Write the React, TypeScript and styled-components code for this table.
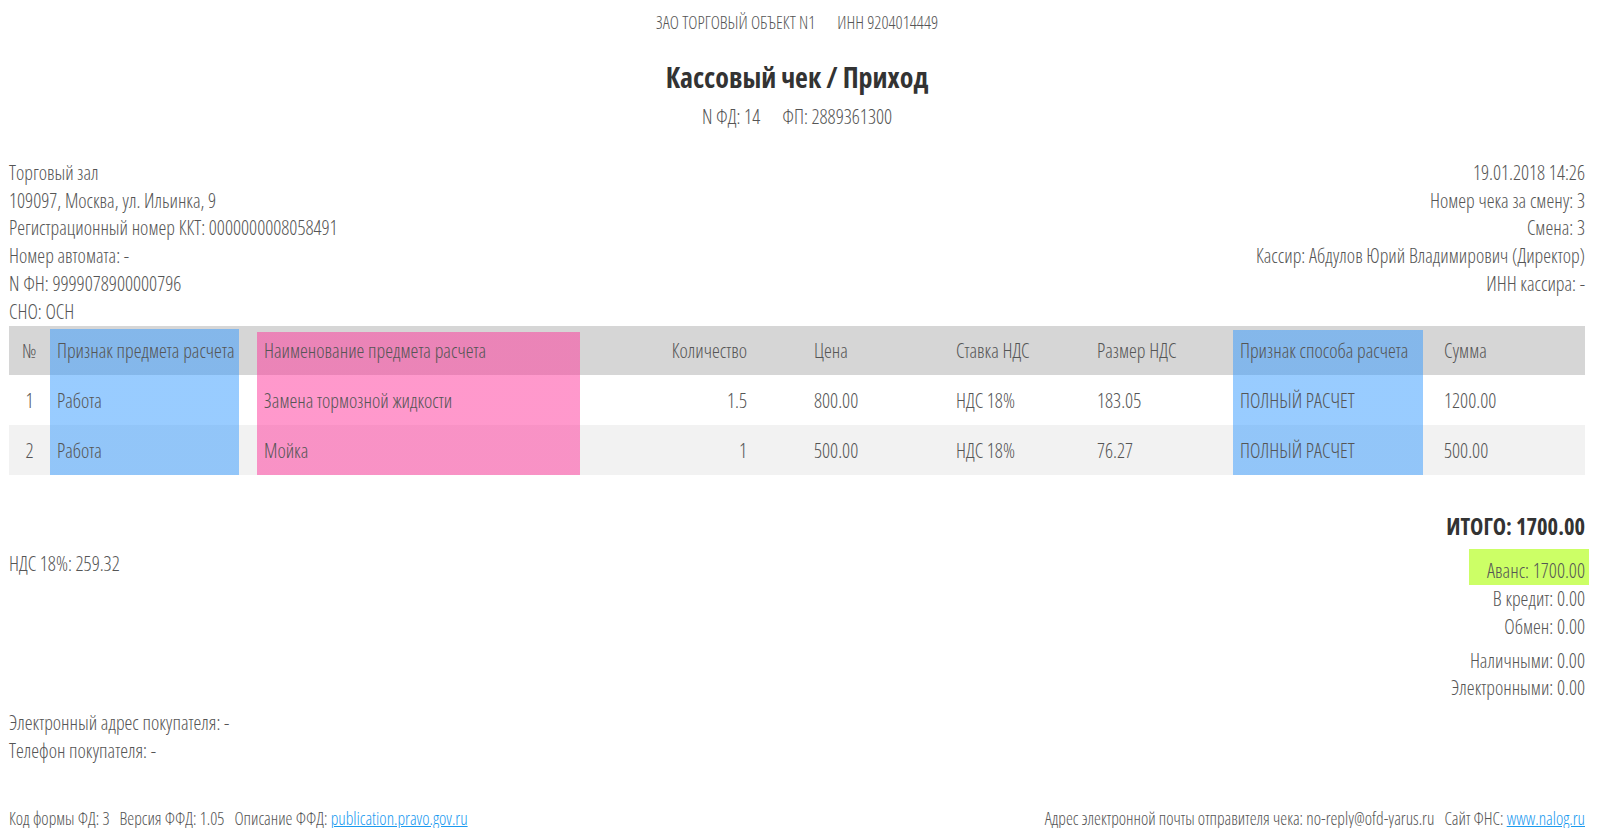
import React from 'react';
import styled, { createGlobalStyle, css } from 'styled-components';

const GlobalStyle = createGlobalStyle`
  html, body {
    margin: 0;
    padding: 0;
    background: #fff;
  }
  body {
    font-family: "Open Sans", "Liberation Sans Narrow", "DejaVu Sans Condensed", sans-serif;
    font-stretch: 75%;
    font-weight: 300;
    color: #555;
  }
`;

type Mark = 'blue' | 'pink';

interface Column {
  title: string;
  width: number;
  align?: 'left' | 'right' | 'center';
  pr?: number;
  mark?: Mark;
  markRight?: number;
  headTop?: number;
}

const columns: Column[] = [
  { title: '№', width: 41, align: 'center' },
  { title: 'Признак предмета расчета', width: 207, mark: 'blue', markRight: 18, headTop: 3 },
  { title: 'Наименование предмета расчета', width: 323, mark: 'pink', markRight: 0, headTop: 6 },
  { title: 'Количество', width: 227, align: 'right', pr: 60 },
  { title: 'Цена', width: 142 },
  { title: 'Ставка НДС', width: 141 },
  { title: 'Размер НДС', width: 143 },
  { title: 'Признак способа расчета', width: 204, mark: 'blue', markRight: 14, headTop: 4 },
  { title: 'Сумма', width: 148 },
];

const rows = [
  ['1', 'Работа', 'Замена тормозной жидкости', '1.5', '800.00', 'НДС 18%', '183.05', 'ПОЛНЫЙ РАСЧЕТ', '1200.00'],
  ['2', 'Работа', 'Мойка', '1', '500.00', 'НДС 18%', '76.27', 'ПОЛНЫЙ РАСЧЕТ', '500.00'],
];

const markColors: Record<Mark, string> = {
  blue: 'rgba(51, 153, 255, 0.5)',
  pink: 'rgba(255, 51, 153, 0.5)',
};

const Page = styled.div`
  padding: 12px 18px 0 9px;
  font-size: 19.8px;
`;

const TopLine = styled.div<{ $size?: number }>`
  display: flex;
  justify-content: center;
  gap: 22px;
  font-size: ${(p) => p.$size ?? 17.4}px;
  line-height: 20px;
`;

const Title = styled.h1`
  margin: 29px 0 0;
  text-align: center;
  font-size: 28px;
  line-height: 32px;
  font-weight: 700;
  color: #333;
`;

const SubLine = styled(TopLine)`
  margin-top: 14px;
`;

const InfoGrid = styled.div`
  display: flex;
  justify-content: space-between;
  margin-top: 32px;
`;

const InfoCol = styled.div<{ $right?: boolean }>`
  display: flex;
  flex-direction: column;
  text-align: ${(p) => (p.$right ? 'right' : 'left')};
`;

const Line = styled.div`
  line-height: 27.7px;
  white-space: nowrap;
`;

const Table = styled.table`
  width: 100%;
  border-collapse: collapse;
  table-layout: fixed;
  margin-top: 1px;
`;

const HeadRow = styled.tr`
  background: #d6d6d6;
  height: 49px;
`;

const BodyRow = styled.tr<{ $odd?: boolean }>`
  background: ${(p) => (p.$odd ? '#f2f2f2' : '#fff')};
  height: 50px;
`;

interface CellProps {
  $align?: string;
  $pr?: number;
  $mark?: Mark;
  $markRight?: number;
  $top?: number;
}

const cellBase = css<CellProps>`
  padding: 0 ${(p) => p.$pr ?? 7}px 0 7px;
  text-align: ${(p) => p.$align ?? 'left'};
  font-weight: 300;
  white-space: nowrap;
  vertical-align: middle;
  ${(p) =>
    p.$mark &&
    css`
      background-image: linear-gradient(${markColors[p.$mark]}, ${markColors[p.$mark]});
      background-repeat: no-repeat;
      background-position: left bottom;
      background-size: calc(100% - ${p.$markRight ?? 0}px) calc(100% - ${p.$top ?? 0}px);
    `}
`;

const Th = styled.th<CellProps>`
  ${cellBase}
`;

const Td = styled.td<CellProps>`
  ${cellBase}
`;

const Total = styled.div`
  margin-top: 38px;
  text-align: right;
  font-size: 22.5px;
  line-height: 28px;
  font-weight: 700;
  color: #333;
  font-stretch: 87.5%;
`;

const Summary = styled.div`
  display: flex;
  justify-content: space-between;
  align-items: flex-start;
  margin-top: 8px;
`;

const LeftCol = styled.div`
  padding-top: 1px;
`;

const RightCol = styled.div`
  display: flex;
  flex-direction: column;
  align-items: flex-end;
`;

const Highlight = styled.div`
  background: #ccff66;
  padding: 8px 4px 0 18px;
  margin-right: -4px;
  line-height: 28px;
`;

const Group = styled.div<{ $gap?: number }>`
  margin-top: ${(p) => p.$gap ?? 0}px;
  text-align: right;
`;

const Buyer = styled.div`
  margin-top: 7px;
`;

const Footer = styled.div`
  display: flex;
  justify-content: space-between;
  margin-top: 44px;
  font-size: 17.4px;
  line-height: 20px;
`;

const FooterSide = styled.div`
  display: flex;
  gap: 10px;
  white-space: nowrap;
`;

const Link = styled.a`
  color: #1a9af0;
  text-decoration: underline;
`;

export default function App() {
  return (
    <Page>
      <GlobalStyle />
      <TopLine>
        <span>ЗАО ТОРГОВЫЙ ОБЪЕКТ N1</span>
        <span>ИНН 9204014449</span>
      </TopLine>
      <Title>Кассовый чек / Приход</Title>
      <SubLine $size={19.8}>
        <span>N ФД: 14</span>
        <span>ФП: 2889361300</span>
      </SubLine>

      <InfoGrid>
        <InfoCol>
          <Line>Торговый зал</Line>
          <Line>109097, Москва, ул. Ильинка, 9</Line>
          <Line>Регистрационный номер ККТ: 0000000008058491</Line>
          <Line>Номер автомата: -</Line>
          <Line>N ФН: 9999078900000796</Line>
          <Line>СНО: ОСН</Line>
        </InfoCol>
        <InfoCol $right>
          <Line>19.01.2018 14:26</Line>
          <Line>Номер чека за смену: 3</Line>
          <Line>Смена: 3</Line>
          <Line>Кассир: Абдулов Юрий Владимирович (Директор)</Line>
          <Line>ИНН кассира: -</Line>
        </InfoCol>
      </InfoGrid>

      <Table>
        <colgroup>
          {columns.map((c, i) => (
            <col key={i} style={{ width: c.width }} />
          ))}
        </colgroup>
        <thead>
          <HeadRow>
            {columns.map((c, i) => (
              <Th key={i} $align={c.align} $pr={c.pr} $mark={c.mark} $markRight={c.markRight} $top={c.headTop}>
                {c.title}
              </Th>
            ))}
          </HeadRow>
        </thead>
        <tbody>
          {rows.map((r, ri) => (
            <BodyRow key={ri} $odd={ri % 2 === 1}>
              {r.map((v, ci) => {
                const c = columns[ci];
                return (
                  <Td key={ci} $align={c.align} $pr={c.pr} $mark={c.mark} $markRight={c.markRight}>
                    {v}
                  </Td>
                );
              })}
            </BodyRow>
          ))}
        </tbody>
      </Table>

      <Total>ИТОГО: 1700.00</Total>

      <Summary>
        <LeftCol>
          <Line>НДС 18%: 259.32</Line>
        </LeftCol>
        <RightCol>
          <Highlight>Аванс: 1700.00</Highlight>
          <Group>
            <Line>В кредит: 0.00</Line>
            <Line>Обмен: 0.00</Line>
          </Group>
          <Group $gap={6}>
            <Line>Наличными: 0.00</Line>
            <Line>Электронными: 0.00</Line>
          </Group>
        </RightCol>
      </Summary>

      <Buyer>
        <Line>Электронный адрес покупателя: -</Line>
        <Line>Телефон покупателя: -</Line>
      </Buyer>

      <Footer>
        <FooterSide>
          <span>Код формы ФД: 3</span>
          <span>Версия ФФД: 1.05</span>
          <span>
            Описание ФФД: <Link href="#">publication.pravo.gov.ru</Link>
          </span>
        </FooterSide>
        <FooterSide>
          <span>Адрес электронной почты отправителя чека: no-reply@ofd-yarus.ru</span>
          <span>
            Сайт ФНС: <Link href="#">www.nalog.ru</Link>
          </span>
        </FooterSide>
      </Footer>
    </Page>
  );
}
